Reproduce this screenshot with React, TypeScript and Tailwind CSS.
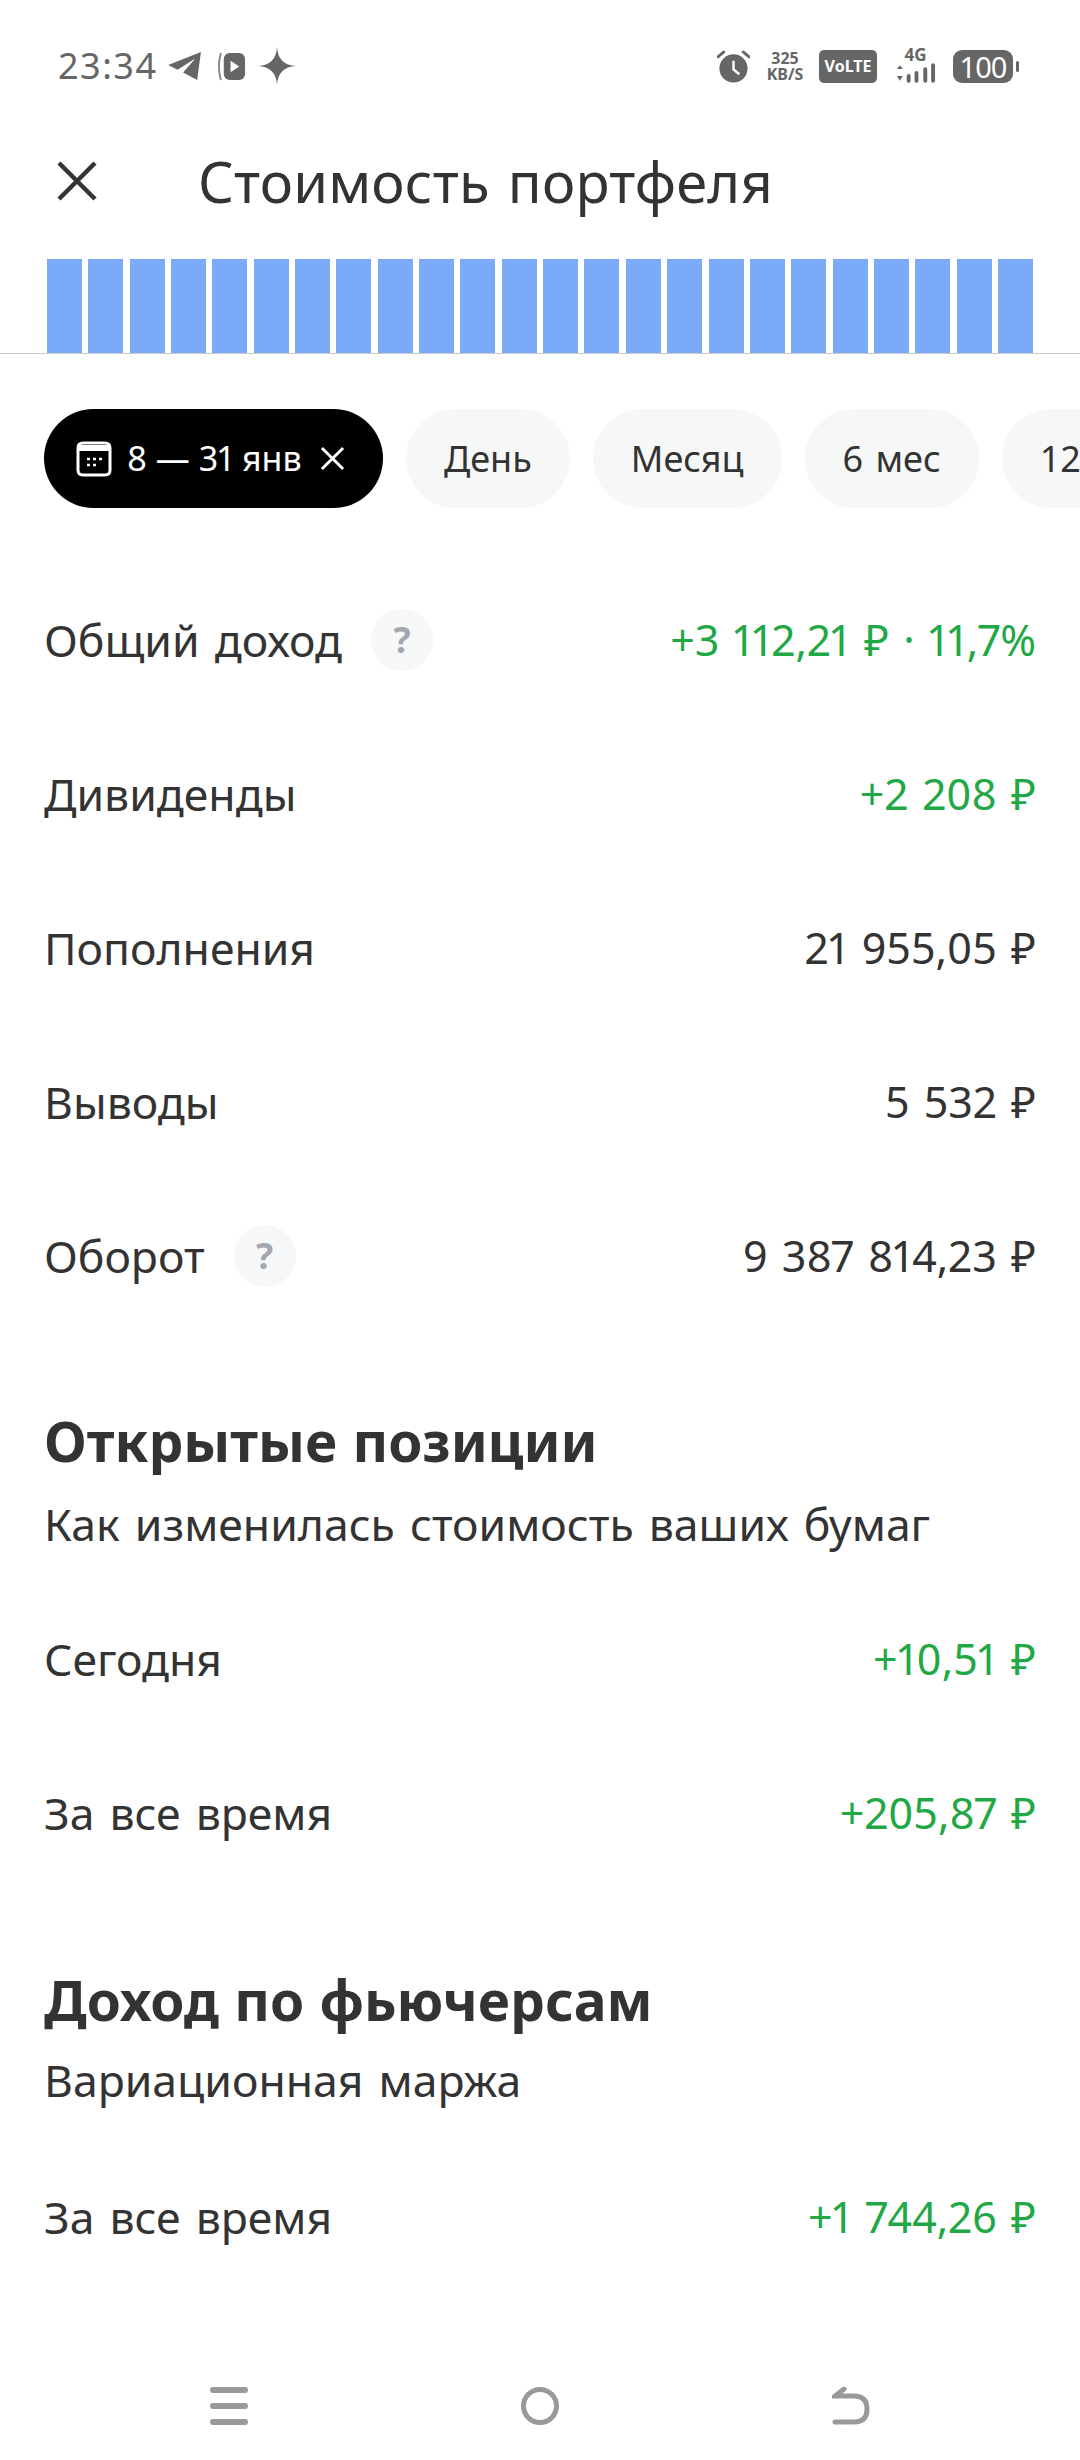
const bars = Array.from({ length: 24 }, (_, i) => i);

function Help() {
  return (
    <span className="flex h-[62px] w-[62px] items-center justify-center rounded-full bg-[#f6f7f8] text-[36px] font-bold text-[#a3a6af]">?</span>
  );
}

function Row({ label, value, green, help }: { label: string; value: string; green?: boolean; help?: boolean }) {
  return (
    <div className="flex h-[154px] items-center justify-between">
      <div className="flex items-center gap-[29px]">
        <span>{label}</span>
        {help && <Help />}
      </div>
      <span className={`text-[43px] proportional-nums [word-spacing:3px] ${green ? "text-[#1fa845]" : "text-[#333333]"}`}>{value}</span>
    </div>
  );
}

function Chip({ label }: { label: string }) {
  return (
    <div className="flex h-[99px] shrink-0 items-center rounded-full bg-[#f6f8f7] px-[38px] text-[36px] text-[#333333] [word-spacing:3px]">{label}</div>
  );
}

export default function App() {
  return (
    <div className="h-[2460px] w-[1080px] overflow-hidden bg-white text-[44.5px] text-[#333333] [font-family:'Noto_Sans',sans-serif] [word-spacing:3.5px]">
      <div className="flex h-[132px] items-center justify-between pl-[58px] pr-[61px] text-[#666666] [word-spacing:0px]">
        <div className="flex items-center">
          <span className="text-[36px] tracking-[1.5px]">23:34</span>
          <svg width="34" height="30" viewBox="0 0 36 32" fill="#666666" className="ml-[10px]"><path d="M0 15 L35 1 L31 31 L16 23 L29 8 L10 20 Z" /></svg>
          <svg width="29" height="29" viewBox="0 0 30 30" className="ml-[15px]"><path d="M4 1 Q0 15 4 29" fill="none" stroke="#888888" strokeWidth="2" /><rect x="7" y="1" width="22" height="28" rx="6" fill="#666666" /><path d="M14 9 L23 15 L14 21 Z" fill="#fff" /></svg>
          <svg width="38" height="38" viewBox="0 0 38 38" className="ml-[12px]" fill="#666666"><path d="M19 0 Q20 18 38 19 Q20 20 19 38 Q18 20 0 19 Q18 18 19 0 Z" /></svg>
        </div>
        <div className="flex items-center">
          <svg width="33" height="33" viewBox="0 0 34 34" fill="#666666"><circle cx="17" cy="19" r="14.5" /><path d="M1 7 L7 2 M33 7 L27 2" stroke="#666666" strokeWidth="3" strokeLinecap="round" /><path d="M17 11 V20 L23 25" fill="none" stroke="#fff" strokeWidth="2.5" /></svg>
          <div className="ml-[15px] flex w-[40px] flex-col items-center text-[16px] font-bold leading-[16px]"><span>325</span><span>KB/S</span></div>
          <div className="ml-[14px] flex h-[33px] w-[58px] items-center justify-center rounded-[5px] bg-[#666666] text-[16px] font-bold text-white">VoLTE</div>
          <div className="ml-[17px] flex w-[43px] flex-col items-center">
            <span className="text-[17px] font-bold leading-[14px]">4G</span>
            <svg width="43" height="22" viewBox="0 0 44 22" fill="#666666"><path d="M3 7 L6 3 L9 7 Z M3 14 L9 14 L6 19 Z" /><rect x="13" y="12" width="4" height="9" rx="2" /><rect x="21" y="9" width="4" height="12" rx="2" /><rect x="30" y="5" width="4" height="16" rx="2" /><rect x="38" y="1" width="4" height="20" rx="2" /></svg>
          </div>
          <div className="ml-[16px] flex h-[33px] w-[60px] items-center justify-center rounded-[9px] bg-[#666666] text-[29px] leading-none tracking-[-1px] text-white">100</div>
          <div className="ml-[3px] h-[11px] w-[3px] rounded-full bg-[#666666]" />
        </div>
      </div>

      <div className="flex h-[98px] items-center pl-[56px]">
        <svg width="42" height="42" viewBox="0 0 42 42" fill="none" stroke="#333333" strokeWidth="4.5"><path d="M3 3 L39 39 M39 3 L3 39" /></svg>
        <span className="ml-[100px] text-[56px] tracking-[0.2px]">Стоимость портфеля</span>
      </div>

      <div className="h-[124px] border-b border-[#c9c9c9] pt-[29px]">
        <div className="ml-[47px] flex h-[94px] w-[986px] justify-between">
          {bars.map((b) => (
            <div key={b} className="h-full w-[35px] bg-[#7aaaf8]" />
          ))}
        </div>
      </div>

      <div className="mt-[55px] flex gap-[23px] overflow-hidden pl-[44px]">
        <div className="flex h-[99px] w-[339px] shrink-0 items-center rounded-full bg-black pl-[32px] text-[34px] text-white proportional-nums [word-spacing:0px]">
          <svg width="36" height="36" viewBox="0 0 36 36" fill="none" stroke="#fff" strokeWidth="3">
            <path d="M7 2 H29 Q34 2 34 7 V29 Q34 34 29 34 H7 Q2 34 2 29 V7 Q2 2 7 2 Z" />
            <path d="M2 4 H34 V10 H2 Z" fill="#fff" stroke="none" />
            <path d="M11 18 h3 M17 18 h3 M23 18 h3 M11 24 h3 M17 24 h3" strokeWidth="2.5" />
          </svg>
          <span className="ml-[15px] w-[170px] whitespace-nowrap">8 — 31 янв</span>
          <svg width="25" height="25" viewBox="0 0 26 26" className="ml-[23px]" fill="none" stroke="#fff" strokeWidth="3"><path d="M2 2 L24 24 M24 2 L2 24" /></svg>
        </div>
        <Chip label="День" />
        <Chip label="Месяц" />
        <Chip label="6 мес" />
        <Chip label="12 мес" />
      </div>

      <div className="mt-[55px] px-[44px]">
        <Row label="Общий доход" value="+3 112,21 ₽ · 11,7%" green help />
        <Row label="Дивиденды" value="+2 208 ₽" green />
        <Row label="Пополнения" value="21 955,05 ₽" />
        <Row label="Выводы" value="5 532 ₽" />
        <Row label="Оборот" value="9 387 814,23 ₽" help />

        <h2 className="mt-[78px] text-[55px] font-bold leading-[60px] [word-spacing:1px]">Открытые позиции</h2>
        <p className="mb-[30px] mt-[25px] leading-[56px]">Как изменилась стоимость ваших бумаг</p>
        <Row label="Сегодня" value="+10,51 ₽" green />
        <Row label="За все время" value="+205,87 ₽" green />

        <h2 className="mt-[80px] text-[55px] font-bold leading-[60px] [word-spacing:1px]">Доход по фьючерсам</h2>
        <p className="mb-[32px] mt-[22px] leading-[56px]">Вариационная маржа</p>
        <Row label="За все время" value="+1 744,26 ₽" green />
      </div>

      <div className="mt-[93px] flex items-center justify-between px-[210px]">
        <svg width="38" height="38" viewBox="0 0 38 38" stroke="#999999" strokeWidth="6" strokeLinecap="round"><path d="M3 3 H35 M3 19 H35 M3 35 H35" /></svg>
        <svg width="38" height="38" viewBox="0 0 38 38" fill="none" stroke="#999999" strokeWidth="5"><circle cx="19" cy="19" r="16.5" /></svg>
        <svg width="38" height="38" viewBox="0 0 38 38" fill="none" stroke="#999999" strokeWidth="5" strokeLinecap="round"><path d="M3 35 H22 Q35 35 35 22 Q35 9 22 9 H3 L12 2" /></svg>
      </div>
    </div>
  );
}
